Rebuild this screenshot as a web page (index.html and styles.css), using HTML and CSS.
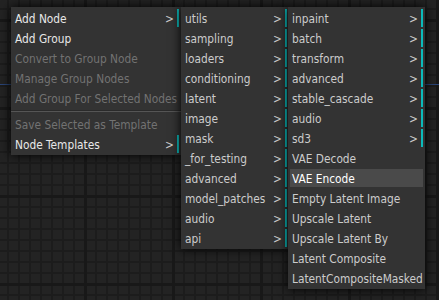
FILE: index.html
```html
<!DOCTYPE html>
<html>
<head>
<meta charset="utf-8">
<link rel="stylesheet" href="styles.css">
</head>
<body>
<div class="canvas">
  <div class="link"></div>

  <div class="menu m1">
    <div class="entry sub main">Add Node</div>
    <div class="entry main">Add Group</div>
    <div class="entry disabled">Convert to Group Node</div>
    <div class="entry disabled">Manage Group Nodes</div>
    <div class="entry disabled">Add Group For Selected Nodes</div>
    <div class="separator"></div>
    <div class="entry disabled">Save Selected as Template</div>
    <div class="entry sub main">Node Templates</div>
  </div>

  <div class="menu m2">
    <div class="entry sub">utils</div>
    <div class="entry sub">sampling</div>
    <div class="entry sub">loaders</div>
    <div class="entry sub">conditioning</div>
    <div class="entry sub">latent</div>
    <div class="entry sub">image</div>
    <div class="entry sub">mask</div>
    <div class="entry sub">_for_testing</div>
    <div class="entry sub">advanced</div>
    <div class="entry sub">model_patches</div>
    <div class="entry sub">audio</div>
    <div class="entry sub">api</div>
  </div>

  <div class="menu m3">
    <div class="entry sub">inpaint</div>
    <div class="entry sub">batch</div>
    <div class="entry sub">transform</div>
    <div class="entry sub">advanced</div>
    <div class="entry sub">stable_cascade</div>
    <div class="entry sub">audio</div>
    <div class="entry sub">sd3</div>
    <div class="entry">VAE Decode</div>
    <div class="entry hover">VAE Encode</div>
    <div class="entry">Empty Latent Image</div>
    <div class="entry">Upscale Latent</div>
    <div class="entry">Upscale Latent By</div>
    <div class="entry">Latent Composite</div>
    <div class="entry">LatentCompositeMasked</div>
  </div>
</div>
</body>
</html>
```

FILE: styles.css
```css
html, body {
  margin: 0;
  padding: 0;
}

body {
  width: 439px;
  height: 300px;
  overflow: hidden;
  font-family: "DejaVu Sans Condensed", "DejaVu Sans", sans-serif;
  font-size: 11.8px;
}

.canvas {
  position: relative;
  width: 439px;
  height: 300px;
  background-color: #232323;
  background-image:
    linear-gradient(90deg, #181818 0, #181818 3px, transparent 3px),
    linear-gradient(180deg, #181818 0, #181818 3px, transparent 3px),
    linear-gradient(90deg, #1c1c1c 0, #1c1c1c 2px, transparent 2px),
    linear-gradient(180deg, #1c1c1c 0, #1c1c1c 2px, transparent 2px);
  background-size: 88px 100%, 100% 88px, 11px 100%, 100% 11px;
  background-position: 84px 0, 0 19px, 7px 0, 0 8px;
}

.link {
  position: absolute;
  left: 0;
  right: 0;
  top: 84px;
  height: 1px;
  background: #2a4577;
}

.menu {
  position: absolute;
  top: 7px;
  background: #333333;
  box-shadow: 0 0 10px #000;
  padding: 0;
  display: flow-root;
}

.m1 { left: 11px; width: 170px; }
.m2 { left: 181px; width: 108px; }
.m3 { left: 288px; width: 137px; }

.entry {
  position: relative;
  margin: 2px;
  padding: 3px 2px 1px;
  height: 14px;
  line-height: 14px;
  color: #cccccc;
  white-space: nowrap;
}

.entry.main {
  color: #e8e8e8;
}

.entry.disabled {
  color: #727272;
}

.entry.sub {
  border-right: 2px solid #0cbaba;
}

.entry.sub::after {
  content: ">";
  position: absolute;
  top: 3px;
  right: 3px;
  color: #cccccc;
}

.entry.hover {
  background: #4a4a4a;
  color: #ffffff;
}

.separator {
  margin: 3px 0;
  height: 0;
  border-top: 1px solid #2a2a2a;
  border-bottom: 1px solid #555555;
}
```
